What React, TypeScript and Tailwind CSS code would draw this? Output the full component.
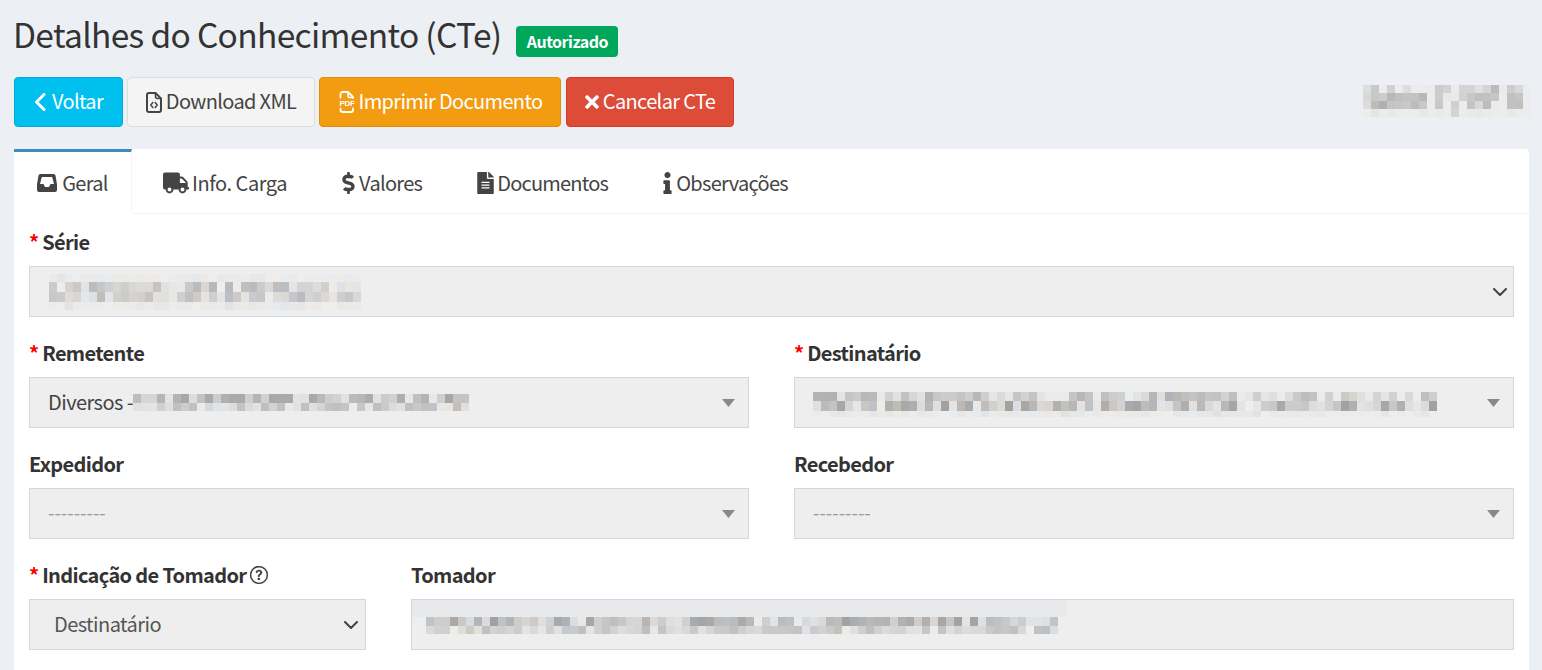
import React from "react";
import { FaTruck, FaDollarSign, FaFileAlt, FaInfo, FaTimes } from "react-icons/fa";
import { BsQuestionCircle } from "react-icons/bs";

function rng(seed: number) {
  let s = seed;
  return () => {
    s = (s * 1664525 + 1013904223) % 4294967296;
    return s / 4294967296;
  };
}

type Row = { h: number; lo: number; hi: number };

function Mosaic({ seed, width, rows, gaps = 0.12, base = 238 }: { seed: number; width: number; rows: Row[]; gaps?: number; base?: number }) {
  const r = rng(seed);
  const cols = Math.ceil(width / 8);
  return (
    <div className="flex flex-col shrink-0" style={{ width }}>
      {rows.map((row, i) => (
        <div key={i} className="flex" style={{ height: row.h }}>
          {Array.from({ length: cols }).map((_, j) => {
            const light = r() < gaps;
            const g = light ? Math.round(base - r() * 14) : Math.round(row.lo + r() * (row.hi - row.lo));
            const t = Math.round((r() - 0.5) * 8);
            return <div key={j} className="shrink-0 w-[8px]" style={{ background: `rgb(${Math.min(g + t, base)},${g},${Math.min(g - t, base)})` }} />;
          })}
        </div>
      ))}
    </div>
  );
}

const HEADER_PATTERN = [
  ["de", "c8", "ec", "d0", "ec", "dd", "ec", "ec", "ea", "cc", "d2", "ec", "d4", "d4", "e0", "d5", "bb", "ea", "cd", "d8", "ec"],
  ["d8", "c8", "cc", "b8", "c0", "c4", "c2", "b8", "ec", "cc", "e8", "ea", "d2", "c8", "c0", "c2", "c6", "ec", "c0", "c4", "ec"],
  ["dc", "bc", "b0", "c4", "c6", "c8", "bc", "c8", "ec", "c8", "ec", "d0", "ec", "c4", "d8", "bc", "ea", "ec", "c2", "c0", "ec"],
  ["ec", "e4", "ec", "e8", "ec", "ec", "ec", "e8", "ec", "ea", "ec", "d4", "ec", "ea", "e8", "ea", "ec", "ec", "e8", "ec", "ec"],
];

function HeaderMosaic() {
  return (
    <div className="flex flex-col w-[168px]">
      {HEADER_PATTERN.map((row, i) => (
        <div key={i} className="flex h-[8px]">
          {row.map((c, j) => (
            <div key={j} className="w-[8px] shrink-0" style={{ background: `#${c}${c}${c}` }} />
          ))}
        </div>
      ))}
    </div>
  );
}

const Req = () => <span className="text-[#f00] mr-[3px] tracking-normal">*</span>;

function Label({ req, children }: { req?: boolean; children: React.ReactNode }) {
  return (
    <div className="h-[23px] mb-[12px] pb-[2px] flex items-center text-[20px] leading-[21px] font-bold text-[#333] tracking-[-0.65px]">
      {req && <Req />}
      {children}
    </div>
  );
}

function Field({ children, right }: { children?: React.ReactNode; right?: React.ReactNode }) {
  return (
    <div className="h-[51px] bg-[#eeeeee] border border-[#d2d6de] flex items-center justify-between overflow-hidden">
      <div className="flex items-center min-w-0">{children}</div>
      {right}
    </div>
  );
}

const Chevron = ({ mr }: { mr: string }) => (
  <svg width="14" height="8" viewBox="0 0 14 8" className={`shrink-0 ${mr}`}>
    <path d="M1 1l6 6 6-6" fill="none" stroke="#444" strokeWidth="2" strokeLinecap="round" strokeLinejoin="round" />
  </svg>
);

const Tri = () => (
  <svg width="13" height="8" viewBox="0 0 13 8" className="shrink-0 mr-[13px]">
    <path d="M0 0h13L6.5 8z" fill="#888" />
  </svg>
);

const AngleLeft = () => (
  <svg width="12" height="18" viewBox="0 0 12 18" className="shrink-0">
    <path d="M10 1.5L2.5 9l7.5 7.5" fill="none" stroke="currentColor" strokeWidth="3" strokeLinecap="round" strokeLinejoin="round" />
  </svg>
);

const InboxIcon = () => (
  <svg width="20" height="18" viewBox="0 0 20 18" className="shrink-0">
    <path
      fillRule="evenodd"
      fill="#444"
      d="M3.5 0h13a2 2 0 0 1 2 1.6L20 10.5V16a2 2 0 0 1-2 2H2a2 2 0 0 1-2-2v-5.5L1.500 1.600A2 2 0 0 1 3.500 0zM4.800 3 3 10h3.500l1.500 3h4l1.500-3H17L15.200 3z"
    />
  </svg>
);

const FileCodeIcon = () => (
  <svg width="16" height="21" viewBox="0 0 16 21" className="shrink-0">
    <path d="M3 1h6.500L15 6.500V18a2 2 0 0 1-2 2H3a2 2 0 0 1-2-2V3a2 2 0 0 1 2-2z" fill="none" stroke="#444" strokeWidth="2" strokeLinejoin="round" />
    <path d="M9.500 1v3.500a2 2 0 0 0 2 2H15" fill="none" stroke="#444" strokeWidth="1.600" />
    <path d="M6.800 10.500 4.800 13l2 2.500M9.200 10.500l2 2.500-2 2.500" fill="none" stroke="#444" strokeWidth="1.500" strokeLinecap="round" strokeLinejoin="round" />
  </svg>
);

const PdfIcon = () => (
  <svg width="18" height="22" viewBox="0 0 18 22" className="shrink-0">
    <path d="M2.500 6.500V3a2 2 0 0 1 2-2H10l5 5v1" fill="none" stroke="#fff" strokeWidth="1.800" strokeLinecap="round" strokeLinejoin="round" />
    <path d="M10 1v4a1.500 1.500 0 0 0 1.500 1.500H15" fill="none" stroke="#fff" strokeWidth="1.500" />
    <text x="9" y="14.500" textAnchor="middle" fontSize="8" fontWeight="700" letterSpacing="-0.3" fill="#fff" fontFamily='"Liberation Sans", sans-serif'>PDF</text>
    <path d="M2.500 17.500V19a2 2 0 0 0 2 2h8.500a2 2 0 0 0 2-2v-1.500" fill="none" stroke="#fff" strokeWidth="1.800" strokeLinecap="round" strokeLinejoin="round" />
  </svg>
);

function Btn({ className, children }: { className: string; children: React.ReactNode }) {
  return (
    <button className={`h-[50px] rounded-[4px] border flex items-center justify-center text-[20px] leading-none tracking-[-0.65px] ${className}`}>
      {children}
    </button>
  );
}

function Tab({ icon, label, active, gap = "gap-[4px]", track = "" }: { icon: React.ReactNode; label: string; active?: boolean; gap?: string; track?: string }) {
  return (
    <div
      className={
        active
          ? `h-[64px] w-[118px] border-t-[3px] border-[#3c8dbc] border-r border-r-[#f4f4f4] flex items-center justify-center ${gap} bg-white`
          : `h-[64px] px-[27px] flex items-center ${gap} ml-[4px] -mr-[3px] pt-[3px]`
      }
    >
      {icon}
      <span className={track}>{label}</span>
    </div>
  );
}

export default function App() {
  return (
    <div className="h-[670px] overflow-hidden bg-[#ecf0f5] pl-[14px] pr-[13px] text-[#333]" style={{ fontFamily: '"Noto Sans CJK SC", "Noto Sans", sans-serif' }}>
      <div className="h-[77px] flex items-start">
        <h1 className="mt-[12px] -ml-[1px] text-[33.5px] leading-[44px] font-normal text-[#333] tracking-[-0.68px]">Detalhes do Conhecimento (CTe)</h1>
        <span className="mt-[26px] ml-[15px] w-[102px] h-[31px] rounded-[4px] bg-[#00a65a] text-white text-[16px] font-bold flex items-center justify-center tracking-[-0.5px] pb-[1px]">Autorizado</span>
      </div>

      <div className="flex items-start h-[72px]">
        <Btn className="w-[109px] bg-[#00c0ef] border-[#00acd6] text-white gap-[6px]"><AngleLeft /><span className="pb-[3px]">Voltar</span></Btn>
        <Btn className="w-[188px] ml-[4px] bg-[#f4f4f4] border-[#dddddd] text-[#444] gap-[4px]"><FileCodeIcon /><span className="pb-[3px]">Download XML</span></Btn>
        <Btn className="w-[242px] ml-[4px] bg-[#f39c12] border-[#e08e0b] text-white gap-[3px]"><PdfIcon /><span className="pb-[3px]">Imprimir Documento</span></Btn>
        <Btn className="w-[168px] ml-[5px] bg-[#dd4b39] border-[#d73925] text-white gap-[4px]"><FaTimes className="w-[14px] h-[20px] shrink-0" /><span className="pb-[3px]">Cancelar CTe</span></Btn>
        <div className="ml-auto mt-[8px] -mr-[2px]">
          <HeaderMosaic />
        </div>
      </div>

      <div className="bg-white rounded-[4px] h-[530px]">
        <div className="flex items-stretch text-[20px] leading-none text-[#444] tracking-[-0.7px]">
          <Tab active gap="gap-[5px]" icon={<InboxIcon />} label="Geral" />
          <div className="flex flex-1 border-b border-[#f4f4f4]">
            <Tab gap="gap-[3px]" track="tracking-[-0.45px]" icon={<FaTruck size={26} />} label="Info. Carga" />
            <Tab icon={<FaDollarSign className="w-[13px] h-[22px] shrink-0" />} label="Valores" />
            <Tab gap="gap-[3px]" track="tracking-[-0.78px]" icon={<FaFileAlt className="w-[17px] h-[22px] shrink-0" />} label="Documentos" />
            <Tab icon={<FaInfo className="w-[9px] h-[22px] shrink-0" />} label="Observações" />
          </div>
        </div>

        <div className="px-[15px] pt-[17px]">
          <Label req>Série</Label>
          <Field right={<Chevron mr="mr-[6px]" />}>
            <div className="ml-[19px]">
              <Mosaic seed={11} width={312} gaps={0.08} rows={[{ h: 8, lo: 232, hi: 238 }, { h: 10, lo: 180, hi: 232 }, { h: 10, lo: 185, hi: 232 }, { h: 8, lo: 230, hi: 238 }]} />
            </div>
          </Field>

          <div className="grid grid-cols-2 gap-x-[45px] mt-[25px]">
            <div>
              <Label req>Remetente</Label>
              <Field right={<Tri />}>
                <span className="ml-[18px] pb-[2px] text-[20px] text-[#444] whitespace-nowrap tracking-[-0.55px]">Diversos -</span>
                <Mosaic seed={23} width={330} rows={[{ h: 9, lo: 165, hi: 232 }, { h: 8, lo: 190, hi: 232 }]} />
              </Field>
            </div>
            <div>
              <Label req>Destinatário</Label>
              <Field right={<Tri />}>
                <div className="ml-[18px] mt-[4px]">
                  <Mosaic seed={31} width={624} rows={[{ h: 9, lo: 175, hi: 235 }, { h: 10, lo: 160, hi: 232 }, { h: 6, lo: 230, hi: 238 }]} />
                </div>
              </Field>
            </div>
          </div>

          <div className="grid grid-cols-2 gap-x-[45px] mt-[25px]">
            <div>
              <Label>Expedidor</Label>
              <Field right={<Tri />}><span className="ml-[18px] pb-[2px] text-[18.5px] text-[#999]">---------</span></Field>
            </div>
            <div>
              <Label>Recebedor</Label>
              <Field right={<Tri />}><span className="ml-[18px] pb-[2px] text-[18.5px] text-[#999]">---------</span></Field>
            </div>
          </div>

          <div className="flex gap-x-[45px] mt-[25px]">
            <div className="w-[337px] shrink-0">
              <Label req>Indicação de Tomador<BsQuestionCircle size={18} className="ml-[4px] shrink-0" strokeWidth={0.3} /></Label>
              <Field right={<Chevron mr="mr-[7px]" />}><span className="ml-[24px] pb-[2px] text-[20px] text-[#555] tracking-[-0.55px]">Destinatário</span></Field>
            </div>
            <div className="flex-1 min-w-0">
              <Label>Tomador</Label>
              <Field>
                <div className="h-[49px] flex flex-col">
                  <div className="h-[17px] w-[655px] shrink-0 bg-[#e8e9ea]" />
                  <div className="ml-[14px]">
                    <Mosaic seed={47} width={625} rows={[{ h: 9, lo: 160, hi: 225 }, { h: 8, lo: 190, hi: 228 }]} />
                  </div>
                </div>
              </Field>
            </div>
          </div>
        </div>
      </div>
    </div>
  );
}
